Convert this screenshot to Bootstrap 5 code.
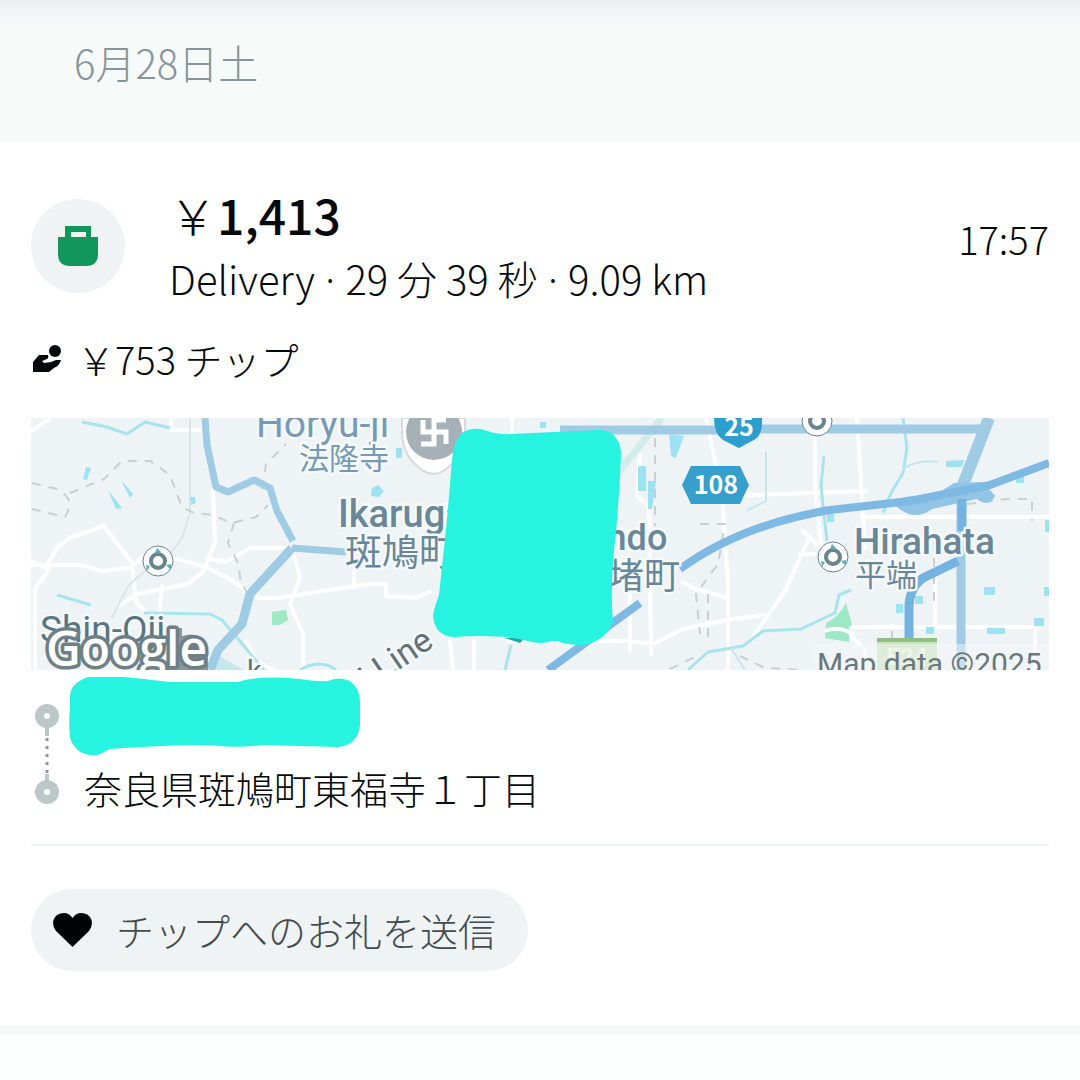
<!DOCTYPE html>
<html lang="ja">
<head>
<meta charset="utf-8">
<meta name="viewport" content="width=device-width, initial-scale=1">
<title>配達の詳細</title>
<link href="https://cdn.jsdelivr.net/npm/bootstrap@5.3.0/dist/css/bootstrap.min.css" rel="stylesheet">
<style>
  body { font-family: "Noto Sans CJK JP", "Noto Sans", sans-serif; font-weight: 300; font-size: 38px; line-height: 56px; color: #05090c; background: #fdfffe; }
  .day-head { background: linear-gradient(#e9eeef 0, #eff3f4 8px, #f6faf9 32px); color: #87959a; font-size: 40px; padding: 34px 74px 52px; }
  .trip { padding: 40px 31px 54px; border-bottom: 10px solid #f5faf9; background: #fff; }
  .trip-icon { width: 94px; height: 94px; background: #eff3f4; margin-right: 44px; }
  .fare { font-size: 48px; line-height: 64px; font-weight: 500; }
  .fare-yen { font-weight: 300; }
  .trip-meta { font-size: 40px; line-height: 64px; }
  .sep { font-family: "Noto Sans", sans-serif; line-height: 1; }
  .trip-time { padding-bottom: 14px; }
  .tip-row { margin-top: 21px; gap: 14px; }
  .map-view { display: block; margin-top: 31px; }
  .stops { margin-top: 6px; }
  .stop-rail { width: 32px; }
  .stop-list { padding-left: 6px; }
  .stop-from { height: 84px; }
  .stop-to { padding-left: 15px; }
  .trip-line { border-color: #eef5f5; border-width: 2px; opacity: 1; margin: 28px 0 43px; }
  .thanks { background: #eff3f4; color: #444b50; font-size: 38px; line-height: 58px; font-weight: 300; padding: 12px 32px 12px 22px; gap: 24px; }
  .thanks:hover { background: #e4eaeb; }
  .road { fill: none; stroke: #fff; stroke-width: 4; stroke-linejoin: round; stroke-linecap: round; }
  .highway { fill: none; stroke: #9fcbe5; stroke-linejoin: round; }
  .express { fill: none; stroke: #7db9e3; stroke-linejoin: round; }
  .river { fill: none; stroke: #a9e4ee; stroke-width: 3; stroke-linejoin: round; }
  .limit { fill: none; stroke: #c9cfd2; stroke-width: 2; stroke-dasharray: 9 8; }
  .place { font-family: Roboto, "Noto Sans CJK JP", sans-serif; font-weight: 400; fill: #6a8799; stroke: #f4f9fa; stroke-width: 5; paint-order: stroke; stroke-linejoin: round; }
  .place-ja { font-family: "Noto Sans CJK JP", sans-serif; }
  .credit { font-family: Roboto, sans-serif; font-weight: 400; fill: #6b777c; }
</style>
<script src="https://cdn.jsdelivr.net/npm/bootstrap@5.3.0/dist/js/bootstrap.bundle.min.js"></script>
</head>
<body>
<header class="day-head">6月28日土</header>
<main>
  <article class="trip">
    <div class="d-flex align-items-center">
      <div class="trip-icon rounded-circle d-flex align-items-center justify-content-center flex-shrink-0">
        <svg width="40" height="40" viewBox="0 0 40 40" aria-hidden="true"><path fill="#12965c" fill-rule="evenodd" d="M7 0h26v11h7v17q0 12-12 12H12Q0 40 0 28V11h7zM13 6v5h15V6z"/></svg>
      </div>
      <div class="flex-grow-1">
        <div class="fare"><span class="fare-yen">￥</span>1,413</div>
        <div class="trip-meta">Delivery<span class="sep"> · </span>29 分 39 秒<span class="sep"> · </span>9.09 km</div>
      </div>
      <time class="trip-time">17:57</time>
    </div>

    <div class="tip-row d-flex align-items-center">
      <svg width="32" height="30" viewBox="0 0 32 30" aria-hidden="true"><circle cx="24" cy="7" r="6" fill="#05090c"/><path fill="#05090c" d="M2 18l6-7h9q1 3-1 4l-5 2 2 2 7-1 5-2h5q-1 5-7 8l-5 4H2z"/></svg>
      <span>￥753 チップ</span>
    </div>

    <svg class="map-view w-100" viewBox="31 417 1018 252" role="img" aria-label="配達ルートの地図">
      <rect x="31" y="417" width="1018" height="252" fill="#eef3f6"/>
      <!-- local roads -->
      <g class="road">
        <path d="M31 564h50l20 6 30-3 12-12 35 3 30 9 20 10 30 20h20l90-14h18v12l30 2 14-6"/>
        <path d="M48 562l10-16q10-10 20-12l26-9 28 37 4 39 8 8M31 560l18 8-14 20v81"/>
        <path d="M213 487l2 54-12 30-15 12-50 10-20 12M210 558l16 3 24-14h46M162 585l-4 40M171 417v12h38M31 430l18-12"/>
        <path d="M292 547l8 30-10 26 13 30v36M354 570v16"/>
        <path d="M246 640l10 20 20 10M450 640l3 29M474 640v29M512 417v30M508 640h120l25 3 30-15 50-10 30-4"/>
        <path d="M706 417l16 75 6 90v87M815 435v50l6 60M857 417l8 130M728 495l138-5M862 516h187"/>
        <path d="M640 455l-3 40 12 10 2 148M630 560v90M725 596l-30-8-12-7M810 535l-25 55-32 46M803 530l14 14M800 553h14M853 626h186M935 570v55M1035 626v43"/>
        <path d="M845 629l20 20v20M440 505l26-8" />
      </g>
      <path d="M190 417v95l-8 25-15 20q-28 15-40 30l-15 30" fill="none" stroke="#dde3e6" stroke-width="2"/>
      <g class="limit">
        <path d="M32 482l25 6q20 10 8 28l-33-8M70 492l34-14 18-18h28l20 14 12 32 12 6 18 2 20 8 24-6 12-12M262 488l4-25 20-20M234 522l-6 20 10 20 3 20 10 15"/>
        <path d="M560 427l25 6M655 420v105M700 523h25l-7 40-22 30 4 40M708 593v50M967 503l40-5h25v22M934 540v60l-8 2M892 630v20M670 668l25-12M740 655l25 12 35 2"/>
      </g>
      <!-- water and parks -->
      <g class="river">
        <path d="M82 421l25 5 20 7 18-12 25 6M57 594l34 10M144 612l66 1 12 6 22 26 20 24M300 669q20-12 36 0M903 417l4 30-4 25-12 20-8 20M505 669l6-25"/>
        <path d="M688 669l20-18 35-6 20-15 38-2 34-16 4-18 12-5M824 455l-3 30 6 55"/>
        <path d="M903 468q15-10 35-7M766 450v50l-20 10M745 669l-14-22" stroke-width="2" stroke="#c4e6ec"/>
      </g>
      <path d="M618 472l44-55" stroke="#d2ecec" stroke-width="7"/>
      <g fill="#9de2f3">
        <path d="M86 466l5 1-4 12-4-1zM121 479l12 14-3 4zM108 489l14 18-6 1zM190 496h5l1 6-5 2zM372 487l6-3 6 6-5 6-8-1zM396 447h6v10h-6zM540 421h6v6h-6zM669 433l15 2-8 22-5-2zM638 465h8v25h-8zM648 480h8l-4 28h-4z"/>
        <path d="M946 460l18-1-2 7h-16zM1016 475h8v7h-8zM827 513h7v8h-7zM984 586h11v8h-11zM1044 586h5v9h-5zM896 603h7v9h-7zM926 626h8v7h-8zM987 627h18v6h-18zM1034 617h10v8h-10zM915 595h8v8h-8zM1045 519h4v12h-4z"/>
      </g>
      <path d="M272 611l14-2 2 10-8 5h-8zM846 602l6 22-3 2v15l-24-4 1-15q14-7 20-20z" fill="#9de8c5"/>
      <path d="M825 630q16-6 28 4" fill="none" stroke="#fff" stroke-width="4"/>
      <path d="M214 652l30 17h-30z" fill="#c5e8ec"/>
      <!-- trunk roads -->
      <g class="highway">
        <path stroke-width="7" d="M205 417l2 27 9 42 12 5 26-12 16 8 7 23 16 30M292 547l54 4"/>
        <path stroke-width="9" d="M292 547l-42 46-8 30-24 26-8 20"/>
        <path stroke-width="9" d="M560 429h160M760 428h226"/>
        <path stroke-width="12" d="M989 417l-28 72"/>
        <path stroke-width="9" d="M961 490v179"/>
      </g>
      <path d="M892 501q15-9 40-5l22-14 28-1q12 12 13 14-6 12-18 3l-45 10q-20 15-40-7z" fill="#92c4e6"/>
      <g class="express">
        <path stroke-width="8" d="M548 669l92-67M680 568q60-44 150-59l80-9 80-16 59-22"/>
        <path stroke-width="9" d="M962 498v32M958 560l-35 17q-14 10-14 30v38" stroke="#74b3df"/>
      </g>
      <!-- route shields -->
      <path d="M714 417h48q1 17-8 22-10 5-15 8-6-3-16-8-9-6-9-22z" fill="#2d9fcd"/>
      <path d="M691 465h49l9 19-9 19h-49l-9-19z" fill="#369fcb"/>
      <g fill="#fff" text-anchor="middle" font-family="Noto Sans CJK JP, sans-serif" font-weight="700">
        <text x="739" y="435" font-size="25">25</text>
        <text x="716" y="493" font-size="25">108</text>
      </g>
      <!-- stations -->
      <g fill="#fff" stroke="#68858e">
        <g stroke-width="1"><circle cx="158" cy="560" r="15"/><circle cx="833" cy="556" r="15"/><circle cx="817" cy="420" r="15"/></g>
        <g stroke-width="4"><circle cx="158" cy="560" r="7"/><circle cx="833" cy="556" r="7"/><circle cx="817" cy="420" r="7"/></g>
      </g>
      <g fill="#5caebc"><path d="M157 547l4 4-6 1zM150 565l-3 5-1-6zM166 564l5 5v-6zM832 543l4 4-6 1zM825 561l-3 5-1-6zM841 560l5 5v-6z"/></g>
      <!-- temple pin -->
      <path d="M402 417v14q0 24 20 38 12 8 24-1 19-14 19-37v-14z" fill="#fff" stroke="#d4dadd" stroke-width="2"/>
      <circle cx="434" cy="431" r="28" fill="#a5b1b6"/>
      <path d="M423 419v12h23v12M446 419h-12v24h-13" fill="none" stroke="#fff" stroke-width="5"/>
      <!-- place names -->
      <g class="place">
        <text x="256" y="436" font-size="39" fill="#7899b5">Horyu-ji</text>
        <text x="299" y="468" font-size="30" class="place-ja" fill="#7899b5">法隆寺</text>
        <text x="338" y="526" font-size="38" font-weight="500">Ikaruga</text>
        <text x="345" y="565" font-size="37" class="place-ja">斑鳩町</text>
        <text x="583" y="549" font-size="36" font-weight="500">Ando</text>
        <text x="572" y="588" font-size="36" class="place-ja">安堵町</text>
        <text x="854" y="553" font-size="37" font-weight="500">Hirahata</text>
        <text x="855" y="585" font-size="31" class="place-ja">平端</text>
        <text x="40" y="641" font-size="37" fill="#587583">Shin-Oji</text>
        <text x="247" y="680" font-size="29" fill="#657176">k</text>
        <text transform="translate(362 694) rotate(-34)" font-size="34" fill="#657176">ji Line</text>
      </g>
      <!-- map credits -->
      <rect x="877" y="637" width="60" height="32" fill="#c8e2bd"/><path d="M877 639h60" stroke="#90bf84" stroke-width="4"/>
      <text x="907" y="664" font-size="24" text-anchor="middle" font-family="Roboto, sans-serif" font-weight="700" fill="#e5f1df">E24</text>
      <rect x="812" y="643" width="237" height="26" fill="#f3f7f8" opacity=".5"/>
      <text class="credit" x="817" y="673" font-size="30">Map data ©2025</text>
      <path d="M167 627h15v8q18-6 26 12v22h-41z" fill="#6f7f86" opacity=".8"/>
      <text x="46" y="665" font-size="48" font-family="Open Sans, sans-serif" font-weight="600" fill="#fff" stroke="#6f7f86" stroke-width="7" stroke-linejoin="round" paint-order="stroke">Google</text>
      <!-- hidden area -->
      <path d="M505 637h20l-5 5z" fill="#24a695"/>
      <path d="M463 431q12-6 24-1 14 4 24 3l88-4q19 0 22 22-1 32-5 80-5 40-4 75l1 14q-6 19-29 24-18 0-27-4h-6q-10 4-23 0-26-7-74-4-20-1-21-22 2-10 6-20l8-75 5-60q1-19 11-28z" fill="#26f3e0"/>
    </svg>

    <div class="stops d-flex">
      <svg class="stop-rail flex-shrink-0" width="32" height="136" viewBox="0 0 32 136" aria-hidden="true">
        <path d="M16 50v10M16 98v10" stroke="#bcc7c9" stroke-width="4"/>
        <path d="M16 62v35" stroke="#8d999c" stroke-width="3" stroke-dasharray="3 5"/>
        <g fill="#fff" stroke="#bcc7c9" stroke-width="9"><circle cx="16" cy="40" r="7.500"/><circle cx="16" cy="116" r="7.500"/></g>
      </svg>
      <div class="stop-list flex-grow-1">
        <div class="stop-from">
          <svg width="292" height="80" viewBox="69 675 292 80" class="d-block" role="img" aria-label="非表示の住所"><path d="M88 676h36q22 2 46 5h68q20-7 62-3 20 3 28 2 11-5 22 0 10 8 10 20v24q-2 20-22 22l-76-2q-22 3-42 1-20-3-110 3l-12 6q-19 2-27-14-3-10-1-34v-12q1-12 18-18z" fill="#26f3e0"/></svg>
        </div>
        <div class="stop-to">奈良県斑鳩町東福寺１丁目</div>
      </div>
    </div>

    <hr class="trip-line">

    <button type="button" class="thanks btn rounded-pill d-inline-flex align-items-center border-0">
      <svg width="39" height="36" viewBox="0 0 39 36" aria-hidden="true"><path fill="#000406" d="M19.500 35L3 19Q-1 14 .5 8 3 1 11 1q5 0 8.500 5Q23 1 28 1q8 0 10.500 7 1.500 6-2.500 11z"/></svg>
      <span>チップへのお礼を送信</span>
    </button>
  </article>
</main>
</body>
</html>
